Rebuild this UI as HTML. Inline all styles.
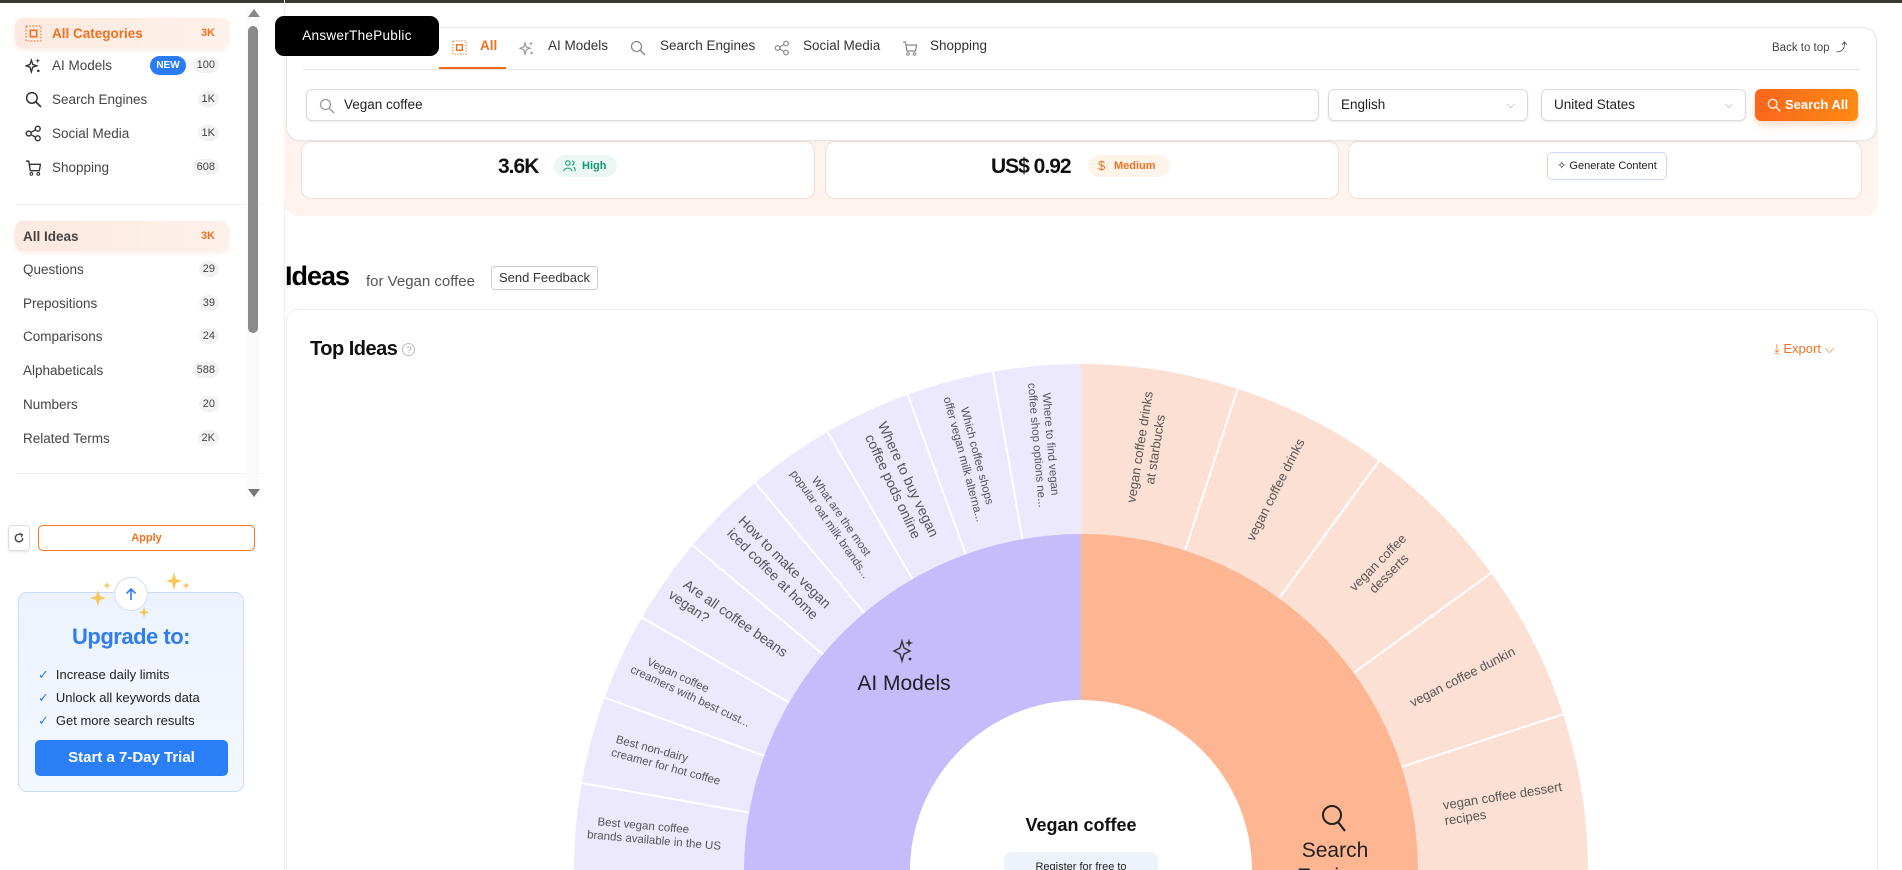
<!DOCTYPE html>
<html><head><meta charset="utf-8">
<style>
*{box-sizing:border-box;margin:0;padding:0}
html,body{width:1902px;height:870px;overflow:hidden}
body{background:#fff;font-family:"Liberation Sans",Arial,sans-serif;color:#333;position:relative}
.a{position:absolute}
.topbar{left:0;top:0;width:1902px;height:3px;background:#3a3a33}
.sb-item{position:absolute;left:15px;width:214px;height:30px;font-size:13.5px;color:#444;display:flex;align-items:center}
.sb-item .ic{position:absolute;left:10px;top:7px;width:17px;height:17px}
.sb-item .lbl{position:absolute;left:37px}
.cnt{position:absolute;right:10px;font-size:11px;color:#444;background:#f2f2f2;border-radius:8px;padding:2px 4px}
.active{background:linear-gradient(90deg,#fde9df,#fdf1ea);border-radius:8px;box-shadow:0 2px 5px rgba(240,120,60,.15);color:#f07020}
.active .cnt{color:#f07020;background:transparent}
.idea{position:absolute;left:15px;width:214px;height:30px;font-size:13.5px;color:#444;display:flex;align-items:center}
.idea .lbl{position:absolute;left:8px}
.tab{position:absolute;top:38px;font-size:13.5px;color:#333}
.sel{position:absolute;top:89px;height:32px;border:1px solid #d9d9d9;border-radius:6px;box-shadow:0 1px 2px rgba(0,0,0,.08);font-size:13.5px;color:#222;padding-left:12px;line-height:30px;background:#fff}
.card{position:absolute;top:141px;height:58px;background:#fff;border:1px solid #f3ddd4;border-radius:10px}
</style></head><body>
<div class="a topbar"></div>

<!-- sidebar -->
<div class="a" style="left:284px;top:0;width:1px;height:870px;background:#efefef"></div>
<div class="sb-item active" style="top:18px">
 <svg class="ic" viewBox="0 0 16 16"><rect x="1" y="1" width="14" height="14" fill="none" stroke="#f07020" stroke-dasharray="1.5 1.5"/><rect x="5" y="5" width="6" height="6" fill="none" stroke="#f07020" stroke-width="1.5"/></svg>
 <span class="lbl" style="font-weight:bold;font-size:13.5px">All Categories</span><span class="cnt" style="font-weight:bold">3K</span></div>
<div class="sb-item" style="top:50px">
 <svg class="ic" viewBox="0 0 16 16"><path d="M6 3 L7.3 7 L11 8.3 L7.3 9.6 L6 14 L4.7 9.6 L1 8.3 L4.7 7Z" fill="none" stroke="#333" stroke-width="1.3"/><path d="M12 1 L12.6 3 L14.5 3.5 L12.6 4 L12 6 L11.4 4 L9.5 3.5 L11.4 3Z" fill="#333"/><circle cx="12.5" cy="13" r="1.2" fill="#333"/></svg>
 <span class="lbl">AI Models</span>
 <span style="position:absolute;left:135px;top:6px;width:36px;height:19px;border-radius:10px;background:#2a7cf6;color:#fff;font-size:10px;font-weight:bold;text-align:center;line-height:19px">NEW</span>
 <span class="cnt">100</span></div>
<div class="sb-item" style="top:84px">
 <svg class="ic" viewBox="0 0 16 16"><circle cx="6.5" cy="6.5" r="5" fill="none" stroke="#333" stroke-width="1.4"/><path d="M10 10 L15 15" stroke="#333" stroke-width="1.6"/></svg>
 <span class="lbl">Search Engines</span><span class="cnt">1K</span></div>
<div class="sb-item" style="top:118px">
 <svg class="ic" viewBox="0 0 16 16"><circle cx="3.5" cy="8" r="2.3" fill="none" stroke="#333" stroke-width="1.3"/><circle cx="12" cy="3.5" r="2.3" fill="none" stroke="#333" stroke-width="1.3"/><circle cx="12" cy="12.5" r="2.3" fill="none" stroke="#333" stroke-width="1.3"/><path d="M5.5 7 L10 4.5 M5.5 9 L10 11.5" stroke="#333" stroke-width="1.3"/></svg>
 <span class="lbl">Social Media</span><span class="cnt">1K</span></div>
<div class="sb-item" style="top:152px">
 <svg class="ic" viewBox="0 0 16 16"><path d="M1 2 H3.5 L5 11 H13.5 L14.5 5 H4" fill="none" stroke="#333" stroke-width="1.3"/><circle cx="6" cy="14" r="1.3" fill="none" stroke="#333"/><circle cx="12.5" cy="14" r="1.3" fill="none" stroke="#333"/></svg>
 <span class="lbl">Shopping</span><span class="cnt">608</span></div>
<div class="a" style="left:15px;top:204px;width:250px;height:1px;background:#f0f0f0"></div>
<div class="idea active" style="top:221px"><span class="lbl" style="font-weight:bold">All Ideas</span><span class="cnt" style="font-weight:bold">3K</span></div>
<div class="idea" style="top:254px"><span class="lbl">Questions</span><span class="cnt">29</span></div>
<div class="idea" style="top:288px"><span class="lbl">Prepositions</span><span class="cnt">39</span></div>
<div class="idea" style="top:321px"><span class="lbl">Comparisons</span><span class="cnt">24</span></div>
<div class="idea" style="top:355px"><span class="lbl">Alphabeticals</span><span class="cnt">588</span></div>
<div class="idea" style="top:389px"><span class="lbl">Numbers</span><span class="cnt">20</span></div>
<div class="idea" style="top:423px"><span class="lbl">Related Terms</span><span class="cnt">2K</span></div>
<div class="a" style="left:15px;top:473px;width:250px;height:1px;background:#f0f0f0"></div>
<!-- scrollbar -->
<div class="a" style="left:247px;top:8px;width:12px;height:490px;background:#fafafa"></div>
<div class="a" style="left:248px;top:9px;width:0;height:0;border-left:6px solid transparent;border-right:6px solid transparent;border-bottom:8px solid #888"></div>
<div class="a" style="left:248px;top:26px;width:10px;height:307px;background:#8a8a8a;border-radius:5px"></div>
<div class="a" style="left:248px;top:489px;width:0;height:0;border-left:6px solid transparent;border-right:6px solid transparent;border-top:8px solid #777"></div>

<div class="a" style="left:8px;top:525px;width:22px;height:26px;border:1px solid #ddd;border-radius:4px;box-shadow:0 1px 2px rgba(0,0,0,.1)"><svg viewBox="0 0 16 16" width="12" height="12" style="position:absolute;left:4px;top:6px"><path d="M13 8 A5 5 0 1 1 11 4" fill="none" stroke="#444" stroke-width="1.8"/><path d="M9 2 L12.5 3.5 L11 7" fill="none" stroke="#444" stroke-width="1.6"/></svg></div>
<div class="a" style="left:38px;top:525px;width:217px;height:26px;border:1px solid #f07a2a;border-radius:5px;color:#f07020;font-size:11px;text-align:center;line-height:24px;font-weight:bold">Apply</div>

<div class="a" style="left:18px;top:592px;width:226px;height:200px;background:linear-gradient(180deg,#edf3fe,#f3f7ff);border:1px solid #c8dbf8;border-radius:9px"></div>
<div class="a" style="left:114px;top:577px;width:34px;height:34px;border-radius:50%;background:#fff;border:1px solid #cfdcf3"><svg viewBox="0 0 16 16" width="16" height="16" style="position:absolute;left:8px;top:8px"><path d="M8 14 V3 M3.5 7.5 L8 3 L12.5 7.5" fill="none" stroke="#2a7cf6" stroke-width="1.6"/></svg></div>
<svg class="a" style="left:80px;top:570px" width="130" height="55" viewBox="0 0 130 55"><g fill="#f8c75a"><path d="M18 20 l2 6 6 2 -6 2 -2 6 -2 -6 -6 -2 6 -2z"/><path d="M27 12 l1 2.5 2.5 1 -2.5 1 -1 2.5 -1 -2.5 -2.5 -1 2.5 -1z"/><path d="M94 2 l2 7 6 2 -6 2 -2 7 -2 -7 -6 -2 6 -2z"/><path d="M106 12 l1 2.5 2.5 1 -2.5 1 -1 2.5 -1 -2.5 -2.5 -1 2.5 -1z"/><path d="M64 37 l1.3 4 4 1.3 -4 1.3 -1.3 4 -1.3 -4 -4 -1.3 4 -1.3z"/></g></svg>
<div class="a" style="left:18px;top:624px;width:226px;text-align:center;font-size:22px;font-weight:bold;color:#2f7df0;letter-spacing:-.5px">Upgrade to:</div>
<div class="a" style="left:38px;top:663px;font-size:13px;color:#222;line-height:23px">
<div><span style="color:#2a7cf6;margin-right:7px">✓</span>Increase daily limits</div>
<div><span style="color:#2a7cf6;margin-right:7px">✓</span>Unlock all keywords data</div>
<div><span style="color:#2a7cf6;margin-right:7px">✓</span>Get more search results</div></div>
<div class="a" style="left:35px;top:740px;width:193px;height:36px;background:#2a7ff7;border-radius:5px;color:#fff;font-weight:bold;font-size:15px;text-align:center;line-height:36px">Start a 7-Day Trial</div>

<!-- stats strip -->
<div class="a" style="left:284px;top:120px;width:1594px;height:96px;background:#fff3ee;border-radius:0 0 14px 14px"></div>
<div class="card" style="left:301px;width:514px"></div>
<div class="card" style="left:825px;width:514px"></div>
<div class="card" style="left:1348px;width:514px"></div>
<div class="a" style="left:498px;top:155px;font-size:21px;font-weight:bold;color:#111;letter-spacing:-1px">3.6K</div>
<div class="a" style="left:554px;top:155px;width:63px;height:22px;background:#eaf7f3;border-radius:11px;color:#149a74;font-size:11px;font-weight:bold;line-height:22px;padding-left:28px">High<svg viewBox="0 0 16 16" width="13" height="13" style="position:absolute;left:9px;top:4px"><circle cx="6" cy="5" r="2.8" fill="none" stroke="#149a74" stroke-width="1.3"/><path d="M1 15 C1 10 11 10 11 15 M11 2.5 A2.5 2.5 0 0 1 11 7.5 M13 10 C15 11 15 13 15 15" fill="none" stroke="#149a74" stroke-width="1.3"/></svg></div>
<div class="a" style="left:991px;top:155px;font-size:21px;font-weight:bold;color:#111;letter-spacing:-1px">US$ 0.92</div>
<div class="a" style="left:1088px;top:155px;width:82px;height:22px;background:#fff4ea;border-radius:11px;color:#f07020;font-size:11px;font-weight:bold;line-height:22px;padding-left:26px"><span style="position:absolute;left:10px;font-size:13px;font-weight:normal">$</span>Medium</div>
<div class="a" style="left:1547px;top:152px;width:120px;height:28px;border:1px solid #cfd8f5;border-left-color:#f6c8b4;border-radius:5px;font-size:11px;color:#222;line-height:26px;text-align:center;background:#fff">✧ Generate Content</div>

<!-- header card -->
<div class="a" style="left:286px;top:27px;width:1591px;height:114px;background:#fff;border:1px solid #e6e6e6;border-radius:14px;box-shadow:0 1px 4px rgba(0,0,0,.04)"></div>
<div class="a" style="left:275px;top:16px;width:164px;height:40px;background:#000;border-radius:9px;color:#fff;font-size:13.5px;line-height:40px;text-align:center;letter-spacing:.3px">AnswerThePublic</div>
<div class="a" style="left:303px;top:69px;width:1557px;height:1px;background:#e4e4e4"></div>
<div class="a" style="left:439px;top:67px;width:67px;height:2px;background:#f06a1c"></div>
<svg class="a" style="left:452px;top:40px" width="15" height="15" viewBox="0 0 16 16"><rect x="1" y="1" width="14" height="14" fill="none" stroke="#f07020" stroke-dasharray="1.5 1.5"/><rect x="5" y="5" width="6" height="6" fill="none" stroke="#f07020" stroke-width="1.5"/></svg>
<div class="tab" style="left:480px;color:#f07020;font-weight:bold">All</div>
<svg class="a" style="left:519px;top:40px" width="16" height="16" viewBox="0 0 16 16"><path d="M6 3 L7.3 7 L11 8.3 L7.3 9.6 L6 14 L4.7 9.6 L1 8.3 L4.7 7Z" fill="none" stroke="#999" stroke-width="1.2"/><path d="M12 1 L12.6 3 L14.5 3.5 L12.6 4 L12 6 L11.4 4 L9.5 3.5 L11.4 3Z" fill="#999"/><circle cx="12.5" cy="13" r="1.2" fill="#999"/></svg>
<div class="tab" style="left:548px">AI Models</div>
<svg class="a" style="left:630px;top:40px" width="16" height="16" viewBox="0 0 16 16"><circle cx="6.5" cy="6.5" r="5" fill="none" stroke="#888" stroke-width="1.3"/><path d="M10 10 L15 15" stroke="#888" stroke-width="1.5"/></svg>
<div class="tab" style="left:660px">Search Engines</div>
<svg class="a" style="left:774px;top:40px" width="16" height="16" viewBox="0 0 16 16"><circle cx="3.5" cy="8" r="2.3" fill="none" stroke="#888" stroke-width="1.2"/><circle cx="12" cy="3.5" r="2.3" fill="none" stroke="#888" stroke-width="1.2"/><circle cx="12" cy="12.5" r="2.3" fill="none" stroke="#888" stroke-width="1.2"/><path d="M5.5 7 L10 4.5 M5.5 9 L10 11.5" stroke="#888" stroke-width="1.2"/></svg>
<div class="tab" style="left:803px">Social Media</div>
<svg class="a" style="left:902px;top:40px" width="16" height="16" viewBox="0 0 16 16"><path d="M1 2 H3.5 L5 11 H13.5 L14.5 5 H4" fill="none" stroke="#888" stroke-width="1.2"/><circle cx="6" cy="14" r="1.3" fill="none" stroke="#888"/><circle cx="12.5" cy="14" r="1.3" fill="none" stroke="#888"/></svg>
<div class="tab" style="left:930px">Shopping</div>
<div class="a" style="left:1772px;top:39px;font-size:11.5px;color:#444">Back to top&nbsp; ⤴</div>

<div class="sel" style="left:306px;width:1013px;padding-left:37px">Vegan coffee<svg viewBox="0 0 16 16" width="16" height="16" style="position:absolute;left:12px;top:8px"><circle cx="6.5" cy="6.5" r="5" fill="none" stroke="#999" stroke-width="1.3"/><path d="M10 10 L15 15" stroke="#999" stroke-width="1.4"/></svg></div>
<div class="sel" style="left:1328px;width:200px">English<span style="position:absolute;right:12px;color:#999;font-size:11px">⌵</span></div>
<div class="sel" style="left:1541px;width:205px">United States<span style="position:absolute;right:12px;color:#999;font-size:11px">⌵</span></div>
<div class="a" style="left:1755px;top:89px;width:103px;height:32px;border-radius:6px;background:linear-gradient(90deg,#fb661d,#fd8a12);color:#fff;font-weight:bold;font-size:13px;line-height:32px;padding-left:30px;box-shadow:0 4px 8px rgba(250,110,30,.25)">Search All<svg viewBox="0 0 16 16" width="14" height="14" style="position:absolute;left:12px;top:9px"><circle cx="6.5" cy="6.5" r="5" fill="none" stroke="#fff" stroke-width="1.4"/><path d="M10 10 L15 15" stroke="#fff" stroke-width="1.5"/></svg></div>

<!-- Ideas -->
<div class="a" style="left:285px;top:261px;font-size:27px;font-weight:bold;color:#000;letter-spacing:-1px">Ideas</div>
<div class="a" style="left:366px;top:273px;font-size:15px;color:#555">for Vegan coffee</div>
<div class="a" style="left:491px;top:266px;width:107px;height:24px;border:1px solid #ccc;border-radius:4px;font-size:13px;color:#333;text-align:center;line-height:22px">Send Feedback</div>

<div class="a" style="left:286px;top:309px;width:1592px;height:561px;border:1px solid #ececec;border-bottom:none;border-radius:12px 12px 0 0;background:#fff;overflow:hidden">
<svg width="1592" height="561" style="position:absolute;left:-1px;top:-1px" font-family="Liberation Sans, Arial, sans-serif">
<g transform="translate(795,562)">
 <path d="M0,-507 A507,507 0 0,0 0,507 Z" fill="#ece8fd"/>
 <path d="M0,-507 A507,507 0 0,1 0,507 Z" fill="#fde0d4"/>
 <path d="M0,-337 A337,337 0 0,0 0,337 Z" fill="#c6bbfb"/>
 <path d="M0,-337 A337,337 0 0,1 0,337 Z" fill="#fdb592"/>
 <circle r="171" fill="#fff"/>
 <g stroke="#fff" stroke-width="2">
  <line x1="0" y1="-337" x2="0" y2="-507" transform="rotate(-10)"/>
  <line x1="0" y1="-337" x2="0" y2="-507" transform="rotate(-20)"/>
  <line x1="0" y1="-337" x2="0" y2="-507" transform="rotate(-30)"/>
  <line x1="0" y1="-337" x2="0" y2="-507" transform="rotate(-40)"/>
  <line x1="0" y1="-337" x2="0" y2="-507" transform="rotate(-50)"/>
  <line x1="0" y1="-337" x2="0" y2="-507" transform="rotate(-60)"/>
  <line x1="0" y1="-337" x2="0" y2="-507" transform="rotate(-70)"/>
  <line x1="0" y1="-337" x2="0" y2="-507" transform="rotate(-80)"/>
  <line x1="0" y1="-337" x2="0" y2="-507" transform="rotate(18)"/>
  <line x1="0" y1="-337" x2="0" y2="-507" transform="rotate(36)"/>
  <line x1="0" y1="-337" x2="0" y2="-507" transform="rotate(54)"/>
  <line x1="0" y1="-337" x2="0" y2="-507" transform="rotate(72)"/>
 </g>
 <g fill="#555" text-anchor="middle" font-size="11.5">
  <text transform="rotate(-5) translate(0,-428) rotate(90)"><tspan x="0" dy="-0.3em">Where to find vegan</tspan><tspan x="0" dy="1.2em">coffee shop options ne...</tspan></text>
  <text transform="rotate(-15) translate(0,-428) rotate(90)"><tspan x="0" dy="-0.3em">Which coffee shops</tspan><tspan x="0" dy="1.2em">offer vegan milk alterna...</tspan></text>
  <text font-size="14" transform="rotate(-25) translate(0,-428) rotate(90)"><tspan x="0" dy="-0.3em">Where to buy vegan</tspan><tspan x="0" dy="1.2em">coffee pods online</tspan></text>
  <text transform="rotate(-35) translate(0,-428) rotate(90)"><tspan x="0" dy="-0.3em">What are the most</tspan><tspan x="0" dy="1.2em">popular oat milk brands...</tspan></text>
  <text font-size="14" transform="rotate(-45) translate(0,-428) rotate(90)"><tspan x="0" dy="-0.3em">How to make vegan</tspan><tspan x="0" dy="1.2em">iced coffee at home</tspan></text>
  <text font-size="14" transform="rotate(-55) translate(0,-428) rotate(90)"><tspan x="0" dy="-0.3em">Are all coffee beans</tspan><tspan x="-45" dy="1.2em">vegan?</tspan></text>
  <text transform="rotate(-65) translate(0,-428) rotate(90)"><tspan x="-20" dy="-0.3em">Vegan coffee</tspan><tspan x="0" dy="1.2em">creamers with best cust...</tspan></text>
  <text transform="rotate(-75) translate(0,-428) rotate(90)"><tspan x="-18" dy="-0.3em">Best non-dairy</tspan><tspan x="0" dy="1.2em">creamer for hot coffee</tspan></text>
  <text transform="rotate(-85) translate(0,-428) rotate(90)"><tspan x="-12" dy="-0.3em">Best vegan coffee</tspan><tspan x="0" dy="1.2em">brands available in the US</tspan></text>
 </g>
 <g fill="#555" text-anchor="middle" font-size="13">
  <text transform="rotate(9) translate(0,-428) rotate(-90)"><tspan x="0" dy="-0.3em">vegan coffee drinks</tspan><tspan x="0" dy="1.2em">at starbucks</tspan></text>
  <text transform="rotate(27) translate(0,-428) rotate(-90)"><tspan x="0" dy="0.35em">vegan coffee drinks</tspan></text>
  <text transform="rotate(45) translate(0,-428) rotate(-90)"><tspan x="0" dy="-0.3em">vegan coffee</tspan><tspan x="0" dy="1.2em">desserts</tspan></text>
  <text transform="rotate(63) translate(0,-428) rotate(-90)"><tspan x="0" dy="0.35em">vegan coffee dunkin</tspan></text>
  <text transform="rotate(81) translate(0,-428) rotate(-90)"><tspan x="0" dy="-0.3em">vegan coffee dessert</tspan><tspan x="-40" dy="1.2em">recipes</tspan></text>
 </g>
 <g transform="translate(-177,-220)"><path d="M-2,-10 L0,-3 L6,0 L0,3 L-2,10 L-4,3 L-10,0 L-4,-3Z" fill="none" stroke="#333" stroke-width="1.4"/><path d="M5,-12 L6,-9 L9,-8 L6,-7 L5,-4 L4,-7 L1,-8 L4,-9Z" fill="#333"/><circle cx="6" cy="8" r="1.4" fill="#333"/></g>
 <text x="-177" y="-181" text-anchor="middle" font-size="21" fill="#222">AI Models</text>
 <g transform="translate(254,-52)"><circle cx="-3" cy="-4" r="9" fill="none" stroke="#222" stroke-width="2"/><path d="M3,3 L10,12" stroke="#222" stroke-width="2.2"/></g>
 <text x="254" y="-14" text-anchor="middle" font-size="21" fill="#222">Search</text>
 <text x="254" y="12" text-anchor="middle" font-size="21" fill="#222">Engines</text>
 <text x="0" y="-40" text-anchor="middle" font-size="18" font-weight="bold" fill="#111">Vegan coffee</text>
 <rect x="-77" y="-19" width="154" height="40" rx="8" fill="#eef2fb"/>
 <text x="0" y="-1" text-anchor="middle" font-size="11" fill="#222">Register for free to</text>
</g>
</svg>
<div class="a" style="left:23px;top:28px;font-size:20px;font-weight:bold;color:#111;letter-spacing:-.5px">Top Ideas <span style="display:inline-block;width:13px;height:13px;border:1px solid #bbb;border-radius:50%;font-size:9px;color:#aaa;text-align:center;line-height:12px;font-weight:normal;vertical-align:middle">?</span></div>
<div class="a" style="left:1487px;top:31px;font-size:13px;color:#f07020">⤓ Export ⌵</div>
</div>
</body></html>
